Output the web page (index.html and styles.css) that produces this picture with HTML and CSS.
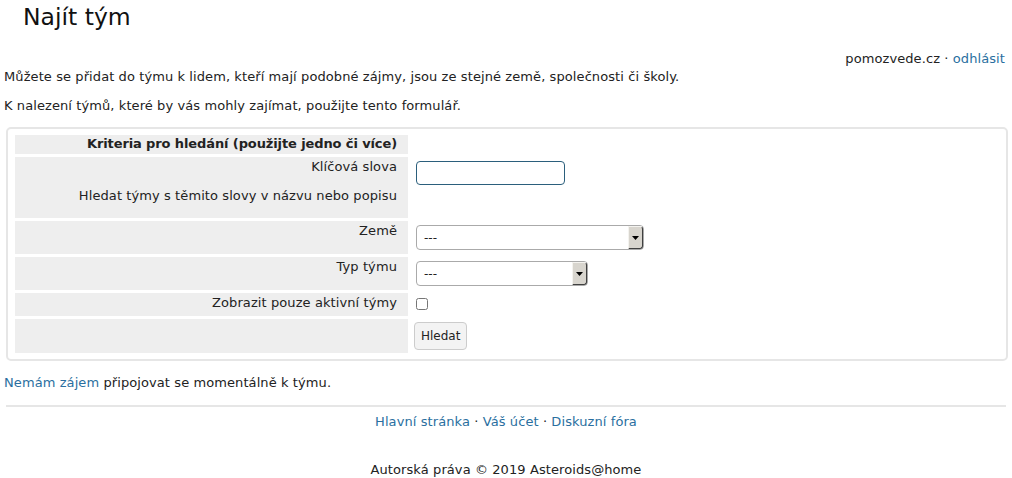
FILE: index.html
```html
<!DOCTYPE html>
<html>
    <head>
        <title>Najít tým</title>
        <meta charset="utf-8">
        <link rel="stylesheet" href="styles.css">
    </head>

    <body>
        <h1 class="page_title">Najít tým</h1>

        <div class="userbar">pomozvede.cz · <a href="#">odhlásit</a></div>

        <p class="intro">Můžete se přidat do týmu k lidem, kteří mají podobné zájmy, jsou ze stejné země, společnosti či školy.</p>
        <p class="intro">K nalezení týmů, které by vás mohly zajímat, použijte tento formulář.</p>

        <div class="search_box">
            <form>
                <table class="search_table">
                    <tr>
                        <th class="label">Kriteria pro hledání (použijte jedno či více)</th>
                        <th></th>
                    </tr>
                    <tr>
                        <td class="label">
                            Klíčová slova
                            <div class="hint">Hledat týmy s těmito slovy v názvu nebo popisu</div>
                        </td>
                        <td class="value"><input type="text" class="keywords"></td>
                    </tr>
                    <tr>
                        <td class="label">Země</td>
                        <td class="value">
                            <span class="select_wrap">
                                <select class="country"><option>---</option></select>
                                <span class="select_btn"><svg width="7" height="4" viewBox="0 0 7 4"><path d="M0 0h7L3.5 4z" fill="#000"/></svg></span>
                            </span>
                        </td>
                    </tr>
                    <tr>
                        <td class="label">Typ týmu</td>
                        <td class="value">
                            <span class="select_wrap">
                                <select class="team_type"><option>---</option></select>
                                <span class="select_btn"><svg width="7" height="4" viewBox="0 0 7 4"><path d="M0 0h7L3.5 4z" fill="#000"/></svg></span>
                            </span>
                        </td>
                    </tr>
                    <tr>
                        <td class="label short">Zobrazit pouze aktivní týmy</td>
                        <td class="value"><input type="checkbox" class="active_only"></td>
                    </tr>
                    <tr>
                        <td class="label"></td>
                        <td class="value go"><button type="button" class="search_btn">Hledat</button></td>
                    </tr>
                </table>
            </form>
        </div>

        <p class="not_now"><a href="#">Nemám zájem</a> připojovat se momentálně k týmu.</p>

        <div class="footer">
            <div class="footer_links"><a href="#">Hlavní stránka</a> · <a href="#">Váš účet</a> · <a href="#">Diskuzní fóra</a></div>
            <div class="copyright">Autorská práva © 2019 Asteroids@home</div>
        </div>
    </body>
</html>
```

FILE: styles.css
```css
body {
    margin: 0;
    padding: 0 4px;
    font-family: "DejaVu Sans", Verdana, sans-serif;
    font-size: 13px;
    line-height: 16px;
    letter-spacing: 0.09px;
    color: #222;
    background-color: #fff;
}
a {
    color: #2a6fa0;
    text-decoration: none;
}
.page_title {
    margin: 0;
    padding: 3px 0 0 19px;
    font-size: 23.5px;
    line-height: 28px;
    font-weight: normal;
    letter-spacing: 0;
    color: #111;
}
.userbar {
    margin-top: 20px;
    text-align: right;
    padding-right: 3px;
}
.intro {
    margin: 2px 0 13px 0;
}
.search_box {
    margin: 0 0 0 2px;
    padding: 3px 4px;
    border: 2px solid #e6e6e6;
    border-radius: 5px;
}
.search_table {
    width: 100%;
    border-spacing: 3px;
}
.search_table th,
.search_table td {
    vertical-align: top;
}
.search_table th.label {
    padding: 1px 11px 2px 10px;
    font-weight: bold;
    letter-spacing: -0.11px;
}
td.label {
    width: 372px;
    padding: 2px 11px 2px 10px;
}
.label {
    text-align: right;
    background-color: #eee;
}
.hint {
    margin: 13px 0 12px 0;
}
td.value {
    padding: 4px 5px;
}
td.go {
    padding: 3px 3px;
}
.keywords {
    display: block;
    box-sizing: border-box;
    width: 149px;
    height: 24px;
    margin: 0;
    border: 1px solid #2b5f7c;
    border-radius: 4px;
    font-family: inherit;
}
.select_wrap {
    position: relative;
    display: inline-block;
    vertical-align: top;
}
.select_wrap select {
    display: block;
    box-sizing: border-box;
    height: 25px;
    margin: 0;
    padding: 0 0 0 7px;
    border: 1px solid #aaa;
    border-radius: 4px;
    background-color: #fff;
    font-family: inherit;
    font-size: 12px;
    color: #222;
    appearance: none;
    -webkit-appearance: none;
}
.country {
    width: 228px;
}
.team_type {
    width: 172px;
}
.select_btn {
    position: absolute;
    top: 1px;
    right: 1px;
    width: 13px;
    height: 21px;
    display: flex;
    align-items: center;
    justify-content: center;
    background-color: #d8d5ce;
    border-top: 1px solid #f4f3ef;
    border-left: 1px solid #f4f3ef;
    border-right: 1px solid #404040;
    border-bottom: 1px solid #404040;
    border-radius: 0 3px 3px 0;
}
.active_only {
    display: block;
    width: 12px;
    height: 12px;
    margin: 1px 0 2px 0;
}
.search_btn {
    box-sizing: border-box;
    height: 28px;
    padding: 0 6px;
    margin: 0;
    border: 1px solid #ccc;
    border-radius: 4px;
    background-color: #f3f3f3;
    font-family: inherit;
    font-size: 12px;
    color: #222;
}
.not_now {
    margin: 14px 0 0 0;
}
.footer {
    margin: 14px 2px 0 2px;
    border-top: 2px solid #e6e6e6;
    text-align: center;
}
.footer_links {
    margin-top: 7px;
}
.copyright {
    margin-top: 32px;
}
```
